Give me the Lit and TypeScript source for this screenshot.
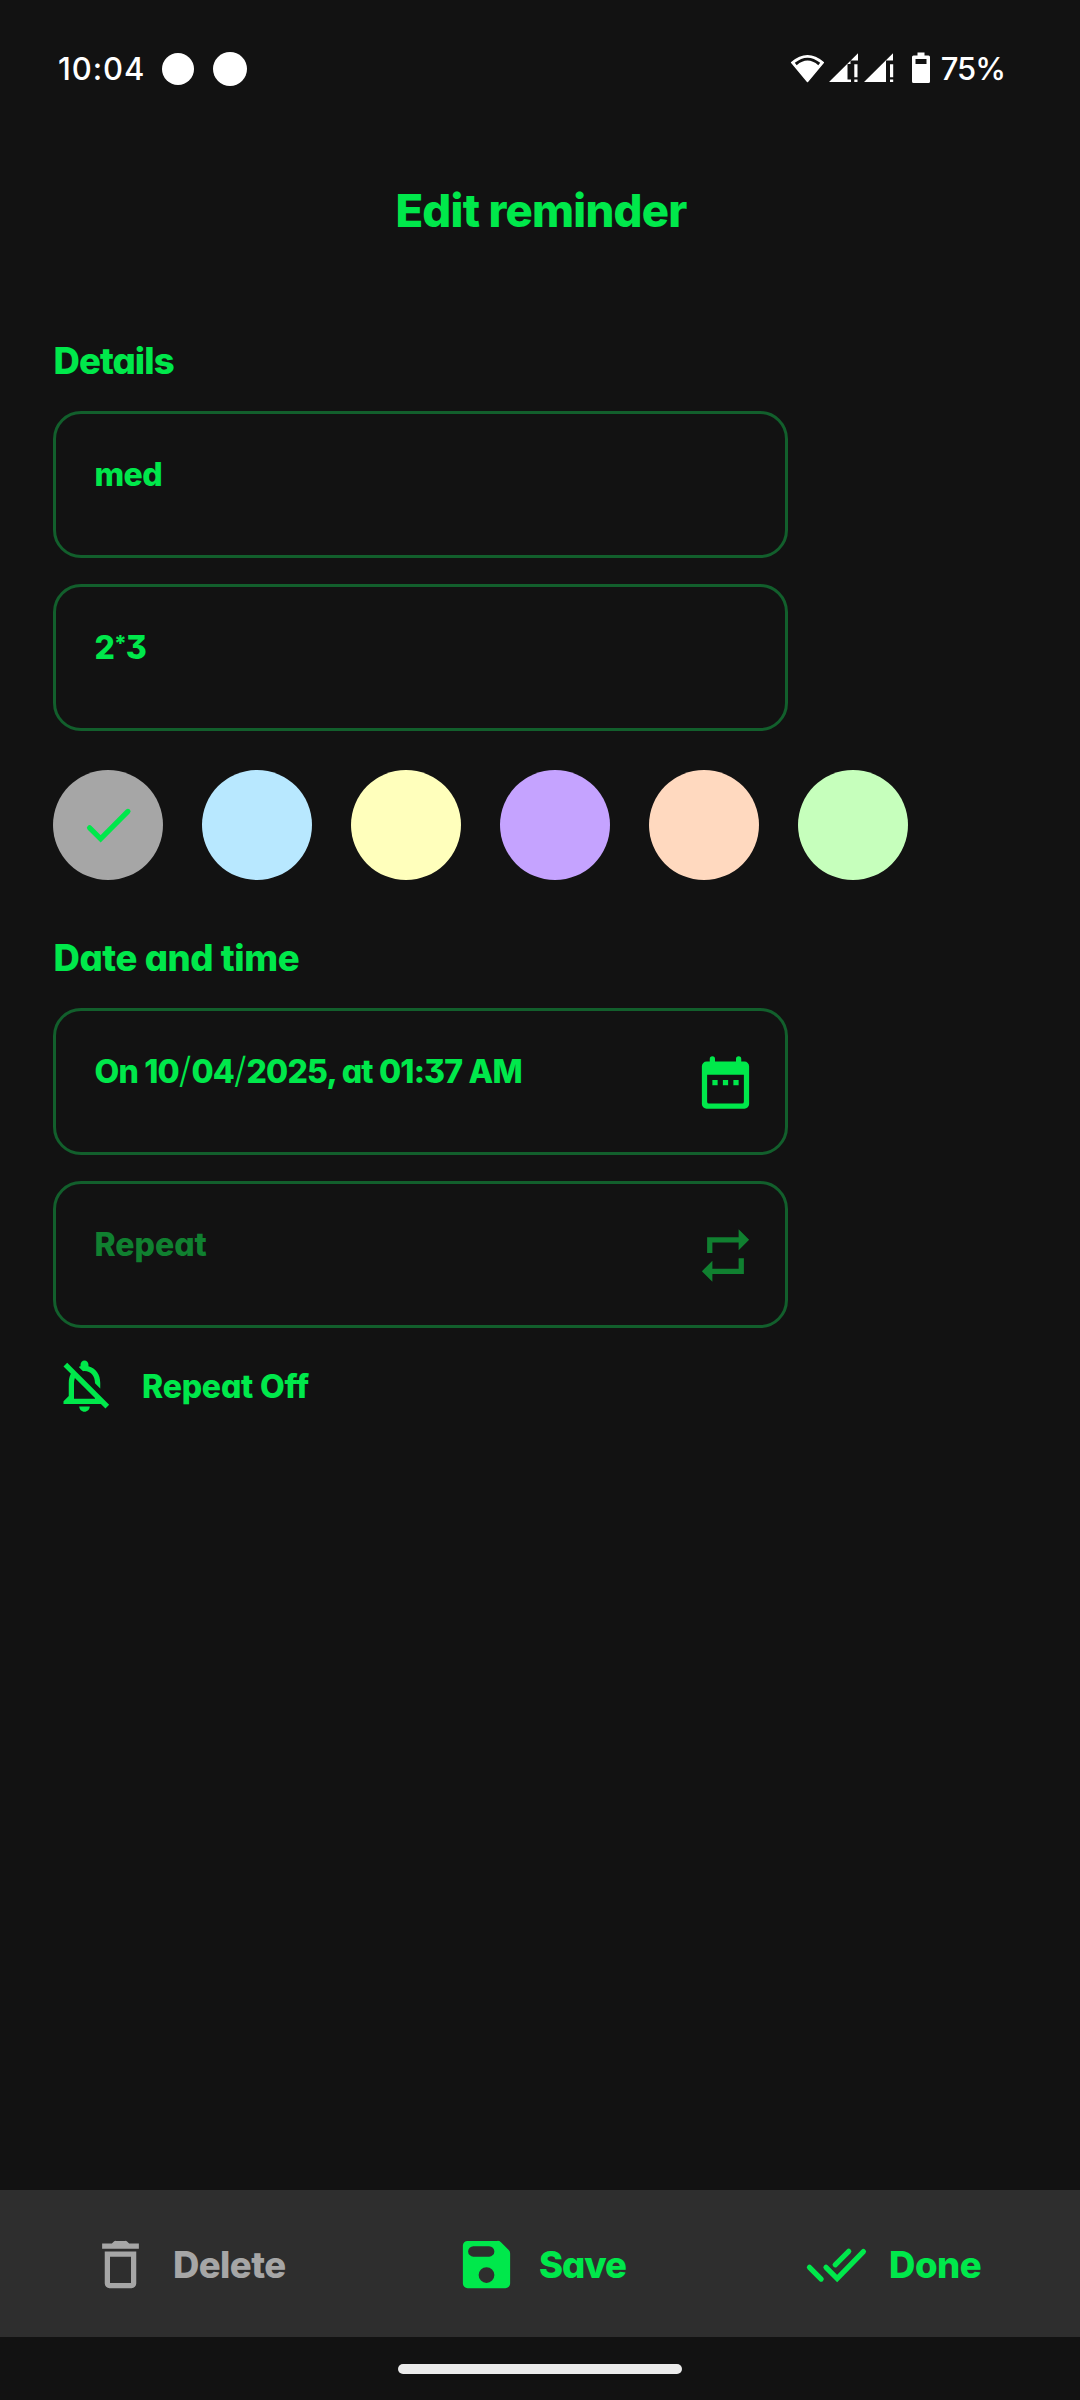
import { LitElement, html, css, svg, TemplateResult } from 'lit';
import { customElement, state } from 'lit/decorators.js';
import { classMap } from 'lit/directives/class-map.js';

const icon = (paths: unknown) =>
  html`<svg class="icon" viewBox="0 0 24 24" fill="currentColor">${paths}</svg>`;

const icons = {
  calendar: icon(svg`<path fill-rule="evenodd" d="M6 3a1 1 0 0 1 2 0v1h8V3a1 1 0 0 1 2 0v1h1.200a1.800 1.800 0 0 1 1.800 1.800v14.400a1.800 1.800 0 0 1-1.800 1.800H4.800a1.800 1.800 0 0 1-1.800-1.800V5.800A1.800 1.800 0 0 1 4.800 4H6zM5 9v10.300a.7.7 0 0 0 .7.7h12.600a.7.7 0 0 0 .7-.7V9z"/><path d="M7 11h2v2H7zM11 11h2v2h-2zM15 11h2v2h-2z"/>`),
  repeat: icon(svg`<path d="M7 7h10v3l4-4-4-4v3H5v6h2V7zm10 10H7v-3l-4 4 4 4v-3h12v-6h-2v4z"/>`),
  bellOff: icon(svg`<path d="M12 22c1.1 0 2-.9 2-2h-4c0 1.100.9 2 2 2zm0-15.500c2.490 0 4 2.020 4 4.500v.1l2 2V11c0-3.070-1.630-5.640-4.500-6.320V4c0-.83-.67-1.500-1.500-1.500s-1.500.67-1.500 1.500v.68c-.24.060-.47.150-.69.230l1.640 1.640c.18-.02.36-.05.55-.05zM5.410 3.350L4 4.760l2.810 2.810C6.290 8.570 6 9.740 6 11v5l-2 2v1h14.240l1.740 1.740 1.410-1.410L5.410 3.350zM16 17H8v-6c0-.68.12-1.320.34-1.900L16 16.760V17z"/>`),
  trash: icon(svg`<path fill-rule="evenodd" d="M5 4h3.700l.8-.75A1 1 0 0 1 10.200 3h3.600a1 1 0 0 1 .7.250l.8.750H19v2H5zM6 7h12v12.200a1.800 1.800 0 0 1-1.800 1.800H7.800A1.800 1.800 0 0 1 6 19.200zM8 9v10h8V9z"/>`),
  save: icon(svg`<path fill-rule="evenodd" d="M4.800 3h11.400a1.800 1.800 0 0 1 1.300.53l2.970 2.970a1.800 1.800 0 0 1 .53 1.300v11.400a1.800 1.800 0 0 1-1.800 1.800H4.800A1.800 1.800 0 0 1 3 19.200V4.800A1.800 1.800 0 0 1 4.800 3zM7 5a2 2 0 0 0 0 4h6a2 2 0 0 0 0-4zM12 13a3 3 0 1 0 0 6 3 3 0 0 0 0-6z"/>`),
  done: icon(svg`<g fill="none" stroke="currentColor" stroke-width="2" stroke-linecap="round"><path d="M8 13.100l4.250 4.250L22.250 7.100" stroke-linejoin="miter"/><path d="M1.700 13.100l4.450 4.450M11.500 12.100l5.150-5.100"/></g>`),
  check: icon(svg`<path d="M4.800 12.900l4.200 4.200L19.400 6.650" fill="none" stroke="currentColor" stroke-width="2" stroke-linecap="round"/>`),
};

interface Action { name: string; label: string; icon: TemplateResult; }

@customElement('app-root')
export class AppRoot extends LitElement {
  @state() private selected = 0;

  private colors = ['#a6a6a6', '#b8e8ff', '#ffffbc', '#c5a3ff', '#ffd9bf', '#c6ffbc'];
  private actions: Action[] = [
    { name: 'delete', label: 'Delete', icon: icons.trash },
    { name: 'save', label: 'Save', icon: icons.save },
    { name: 'done', label: 'Done', icon: icons.done },
  ];

  static styles = css`
    :host {
      display: flex;
      flex-direction: column;
      height: 2400px;
      box-sizing: border-box;
      background: #121212;
      color: #00e84b;
      font-family: Inter, "Liberation Sans", sans-serif;
      font-weight: 800;
      font-feature-settings: "cv11", "cv09", "calt" 0;
      white-space: nowrap;
    }
    svg { display: block; }
    .icon { width: 63px; height: 63px; flex: none; }
    .status { display: flex; height: 138px; align-items: center; justify-content: space-between;
      padding: 0 75px 0 58px; color: #fff; font-size: 31px; font-weight: 500; line-height: 40px; box-sizing: border-box; }
    .left, .right { display: flex; align-items: center; }
    .time { width: 104px; letter-spacing: 0.9px; }
    .dot { width: 32px; height: 32px; border-radius: 50%; background: #fff; }
    .dot.big { width: 34px; height: 34px; margin-left: 19px; }
    .signals { margin-right: 11px; }
    .percent { letter-spacing: -1px; }
    .title { margin: 0; height: 145px; line-height: 145px; padding-left: 2px; text-align: center; font-size: 45.4px; font-weight: 800; letter-spacing: -0.75px; }
    main { flex: 1; padding: 54px 53px 0; }
    h2 { margin: 0 0 26px; padding-left: 0.5px; line-height: 48px; font-size: 36.5px; font-weight: 800; }
    .tight { letter-spacing: -0.95px; }
    .snug { letter-spacing: -0.4px; }
    .field { display: flex; width: 735px; height: 147px; box-sizing: border-box; border: 3px solid #125f2c;
      border-radius: 28px; padding: 40px 28px 0 38.5px; margin-bottom: 26px; justify-content: space-between; font-size: 32px; line-height: 41px; }
    .name { letter-spacing: -0.6px; }
    .note { letter-spacing: -1px; }
    .date { letter-spacing: -0.8px; }
    .slash { font-weight: 300; letter-spacing: 0; font-size: 36px; line-height: 1px; }
    .star { font-size: 22px; line-height: 1px; vertical-align: 8px; letter-spacing: -1px; }
    .muted { color: #108030; }
    .colors { display: flex; gap: 39px; margin: 39px 0 54px; }
    .swatch { display: grid; place-items: center; width: 110px; height: 110px; border-radius: 50%; }
    .swatch .icon { color: #00e84b; }
    .repeat { display: flex; align-items: center; gap: 26px; font-size: 32px; line-height: 40px; letter-spacing: -0.2px; }
    .repeat span { padding-top: 3px; }
    footer { display: grid; grid-template-columns: 366px 350px 1fr; align-items: center; height: 147px; padding-left: 89px; background: #2e2e2e; }
    .action { display: flex; align-items: center; gap: 21px; font-size: 36.5px; line-height: 48px; }
    .action .icon { margin-top: 2px; }
    .action span { padding-top: 3px; }
    .delete { letter-spacing: -0.6px; color: #a6a6a6; }
    .save { letter-spacing: -1.1px; }
    .done { letter-spacing: -0.5px; }
    .nav { display: grid; place-items: center; height: 63px; }
    .pill { width: 284px; height: 10px; border-radius: 5px; background: #ebebeb; }
  `;

  render() {
    return html`
      <div class="status">
        <div class="left">
          <span class="time">10:04</span>
          <span class="dot"></span><span class="dot big"></span>
        </div>
        <div class="right">
          <svg class="signals" width="140" height="34" viewBox="0 0 140 34" fill="#fff">
            <path d="M1.700 10.500Q17.500-3 33.300 10.500L17.500 29.500z" stroke="#fff" stroke-width="1.500" stroke-linejoin="round"/>
            <path d="M4.800 10.800Q17.500.5 30.200 10.800L28.300 13.200Q17.500 4 6.700 13.200z" fill="#121212"/>
            <path d="M39 30L68 1.300V8.500h-7.500V12H57.500V27.500h3.500V30zM64.300 12.300h3.200v13h-3.200zM64.300 27.500h3.200V30h-3.200z"/>
            <path d="M74 30L103 1.300V8.500H96V30zM100 12.300h3.200v13H100zM100 27.500h3.200V30H100z"/>
            <path fill-rule="evenodd" d="M127.500 0.500h7v3h4a1.500 1.500 0 0 1 1.500 1.500v24.500a1.500 1.500 0 0 1-1.500 1.500h-15a1.500 1.500 0 0 1-1.500-1.500V5a1.500 1.500 0 0 1 1.500-1.500h4zM125.500 7v5h11V7z"/>
          </svg>
          <span class="percent">75%</span>
        </div>
      </div>
      <h1 class="title">Edit reminder</h1>
      <main>
        <h2 class="tight">Details</h2>
        <div class="field"><span class="name">med</span></div>
        <div class="field"><span class="note">2<span class="star">*</span>3</span></div>
        <div class="colors">
          ${this.colors.map((c, i) => html`
            <div class="swatch" style="background:${c}" @click=${() => (this.selected = i)}>
              ${i === this.selected ? icons.check : null}
            </div>`)}
        </div>
        <h2 class="snug">Date and time</h2>
        <div class="field">
          <span class="date">On 10<span class="slash">/</span>04<span class="slash">/</span>2025, at 01:37 AM</span>
          ${icons.calendar}
        </div>
        <div class="field muted"><span>Repeat</span>${icons.repeat}</div>
        <div class="repeat">${icons.bellOff}<span>Repeat Off</span></div>
      </main>
      <footer>
        ${this.actions.map((a) => html`
          <div class=${classMap({ action: true, [a.name]: true })}>${a.icon}<span>${a.label}</span></div>`)}
      </footer>
      <div class="nav"><div class="pill"></div></div>
    `;
  }
}
